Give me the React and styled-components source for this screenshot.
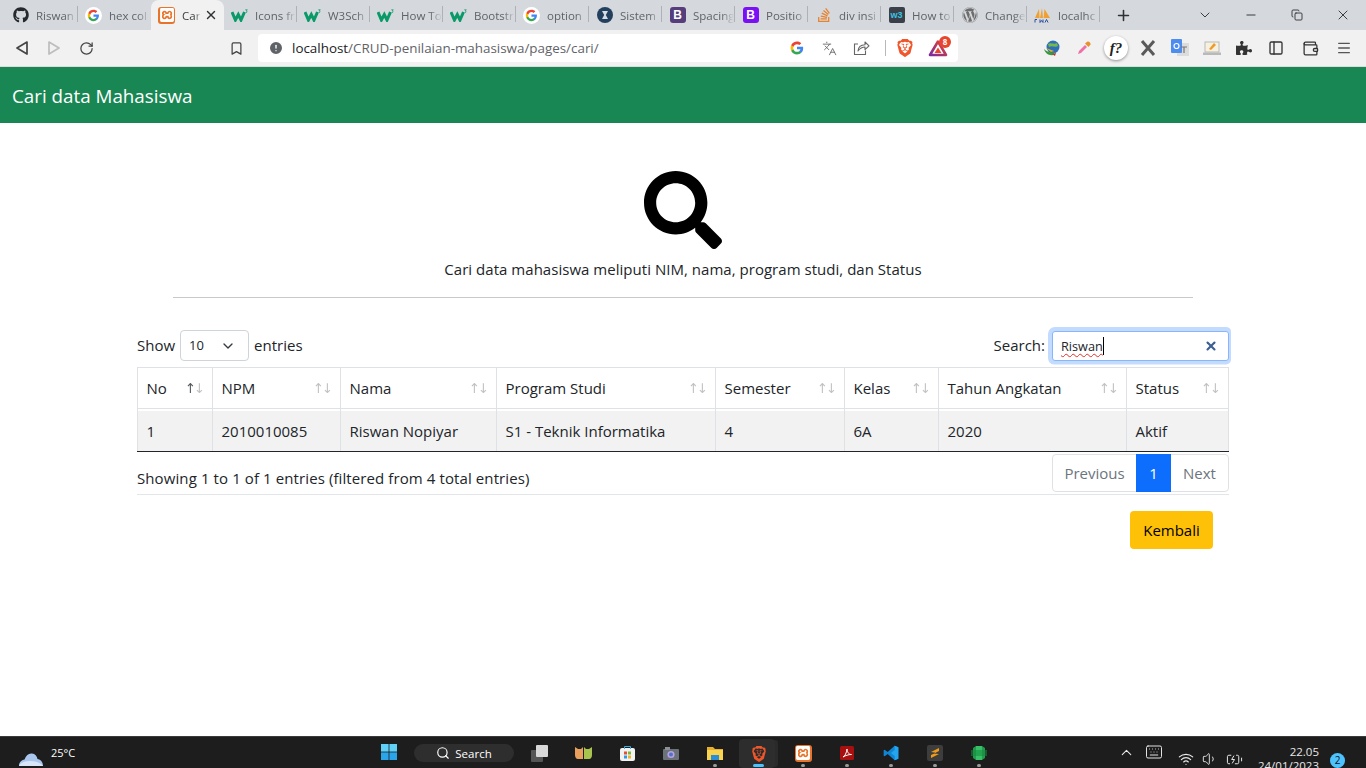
import React from 'react';
import styled, { createGlobalStyle } from 'styled-components';
import { FaGithub, FaStackOverflow, FaWordpress, FaPuzzlePiece, FaSearch } from 'react-icons/fa';
import { SiBrave, SiXampp } from 'react-icons/si';
import { X, Plus, ChevronDown, Minus, RotateCw, Bookmark, Languages, AlertCircle, Menu, Wifi, Volume1, Search as SearchGlyph, ChevronUp, Keyboard, BatteryCharging, Copy, PanelLeft, Wallet } from 'lucide-react';

const SANS = '"Open Sans", "Noto Sans", sans-serif';

const Global = createGlobalStyle`
  html, body { margin: 0; padding: 0; height: 100%; overflow: hidden; background: #fff; }
  #root { height: 100%; }
  * { box-sizing: border-box; }
  body { font-family: ${SANS}; color: #212529; font-size: 15px; }
`;

const Page = styled.div`height: 768px; display: flex; flex-direction: column; overflow: hidden;`;

/* Browser chrome */
const TabStrip = styled.div`height: 30px; flex: none; background: #d5d8dc; display: flex; padding-left: 5px; align-items: stretch;`;
const Tab = styled.div`
  width: 73px; flex: none; position: relative; display: flex; align-items: center; padding-left: 7px;
  background: ${p => p.$active ? '#f1f1f1' : 'transparent'};
  border-radius: 8px 8px 0 0;
  border-right: ${p => p.$noSep ? '1px solid transparent' : '1px solid #aeb1b5'};
  border-image: ${p => p.$noSep ? 'none' : 'linear-gradient(to bottom, transparent 7px, #aeb1b5 7px, #aeb1b5 22px, transparent 22px) 1'};
`;
const FavSlot = styled.span`width: 17px; height: 17px; flex: none; display: flex; align-items: center; justify-content: center; margin-right: 7px;`;
const TabTitle = styled.span`
  flex: 1; min-width: 0; overflow: hidden; white-space: nowrap; font-size: 11.5px; color: ${p => p.$active ? '#3c4043' : '#5f6368'};
  -webkit-mask-image: linear-gradient(to right, #000 70%, transparent 100%);
  mask-image: linear-gradient(to right, #000 70%, transparent 100%);
`;
const TabClose = styled.span`width: 20px; flex: none; display: flex; align-items: center; justify-content: center; margin-right: 2px; color: #2f3134;`;
const NewTab = styled.span`width: 46px; margin-left: 0; display: flex; align-items: center; justify-content: center; color: #2f3134;`;
const WindowControls = styled.div`margin-left: auto; display: flex; align-items: center; color: #2f3134;`;
const WinBtn = styled.span`width: 46px; height: 30px; display: flex; align-items: center; justify-content: center;`;

const Toolbar = styled.div`height: 37px; flex: none; background: #f1f1f1; border-bottom: 1px solid #dcdcdc; display: flex; align-items: flex-start; padding: 4px 6px 0 6px;`;
const ToolBtn = styled.span`
  width: ${p => p.$w || 32}px; height: 28px; flex: none; display: flex; align-items: center; justify-content: center;
  margin-left: ${p => p.$ml || 0}px; color: ${p => p.$color || '#444'};
`;
const Omnibox = styled.div`width: 700px; height: 28px; margin-left: 6px; flex: none; background: #fff; border-radius: 4px; display: flex; align-items: center; padding-left: 10px;`;
const Url = styled.span`flex: 1; margin-left: 8px; font-size: 13.4px; color: #5f6368; white-space: nowrap;`;
const UrlHost = styled.span`color: #202124;`;
const OmniDivider = styled.span`width: 1px; height: 16px; background: #b8b8b8; margin: 0 6px 0 8px;`;
const BatBadge = styled.span`
  position: absolute; top: -2px; right: -3px; width: 12px; height: 12px; border-radius: 50%; background: #e8452c; color: #fff;
  font-size: 8px; font-weight: 700; line-height: 12px; text-align: center;
`;
const BatWrap = styled.span`position: relative; display: flex; width: 20px; height: 20px; align-items: center; justify-content: center;`;
const FontExt = styled.span`
  width: 24px; height: 24px; border-radius: 50%; background: #fff; box-shadow: 0 1px 3px rgba(0,0,0,.4);
  font-family: "Liberation Serif", serif; font-style: italic; font-weight: 700; font-size: 15px; color: #222; display: flex; align-items: center; justify-content: center;
`;

/* Favicons */
const BadgeIcon = styled.span`
  width: 16px; height: 16px; border-radius: 3px; background: ${p => p.$bg}; color: #fff; font-size: 12px; font-weight: 700;
  font-family: "Liberation Sans", sans-serif; display: flex; align-items: center; justify-content: center;
`;
const W3Mark = styled.span`
  width: 16px; height: 16px; border-radius: 2px; background: #3a3f4a; color: #38c4e0; font-size: 9px; font-weight: 700;
  font-family: "Liberation Sans", sans-serif; display: flex; align-items: center; justify-content: center;
`;
const XamppBox = styled.span`width: 17px; height: 17px; background: #e8742b; border-radius: 3px; display: flex; align-items: center; justify-content: center;`;
const SublimeBox = styled.span`width: 16px; height: 16px; background: #3d3d3d; border-radius: 2px; display: flex; align-items: center; justify-content: center;`;
const GPaths = () => (
  <>
    <path fill="#4285F4" d="M22.56 12.25c0-.78-.07-1.53-.2-2.25H12v4.26h5.92c-.26 1.37-1.04 2.53-2.21 3.31v2.77h3.57c2.08-1.92 3.28-4.74 3.28-8.09z" />
    <path fill="#34A853" d="M12 23c2.97 0 5.46-.98 7.28-2.66l-3.57-2.77c-.98.66-2.23 1.06-3.71 1.06-2.86 0-5.29-1.93-6.16-4.53H2.18v2.84C3.99 20.53 7.7 23 12 23z" />
    <path fill="#FBBC05" d="M5.84 14.09c-.22-.66-.35-1.36-.35-2.09s.13-1.43.35-2.09V7.07H2.18C1.43 8.55 1 10.22 1 12s.43 3.45 1.18 4.93l2.85-2.22.81-.62z" />
    <path fill="#EA4335" d="M12 5.38c1.62 0 3.06.56 4.21 1.64l3.15-3.15C17.45 2.09 14.97 1 12 1 7.7 1 3.99 3.47 2.18 7.07l3.66 2.84c.87-2.6 3.3-4.53 6.16-4.53z" />
  </>
);
const GoogleG = ({ size = 16 }) => <svg width={size} height={size} viewBox="0 0 24 24"><GPaths /></svg>;
const GoogleCircle = () => (
  <svg width="17" height="17" viewBox="0 0 24 24">
    <circle cx="12" cy="12" r="12" fill="#fff" />
    <g transform="translate(3.2 3.2) scale(.73)"><GPaths /></g>
  </svg>
);
const W3Logo = () => (
  <svg width="17" height="13" viewBox="0 0 17 13">
    <path d="M1 3 L4.400 11 L7.300 5.500 L10 11 L13.500 3" fill="none" stroke="#0a9a68" strokeWidth="3" strokeLinejoin="miter" />
    <path d="M14.300 .8h2l-1 1.100c.9.200 1 1.700-.3 1.700" fill="none" stroke="#0a9a68" strokeWidth=".8" />
  </svg>
);
const XamppLogo = () => <XamppBox><SiXampp size={14} color="#fff" /></XamppBox>;
const SistemLogo = () => (
  <svg width="16" height="16" viewBox="0 0 16 16">
    <circle cx="8" cy="8" r="8" fill="#24405f" />
    <path d="M5 4h6L8.800 8 11 12H5l2.200-4z" fill="#d7dde4" />
  </svg>
);
const PmaLogo = () => (
  <svg width="17" height="16" viewBox="0 0 17 16">
    <path d="M1 11 L5 2 L5.600 11zM6 11 L8 1 L9 11zM9.600 11 L10.500 2 L16 11z" fill="#f0a030" />
    <path d="M1 12.500h2M1 12.500v3M6 12.500v3l1.500-2 1.500 2v-3M11 15.500l1.500-3 1.500 3" fill="none" stroke="#2a4f9e" strokeWidth="1" />
  </svg>
);
const BatTriangle = () => (
  <svg width="20" height="18" viewBox="0 0 20 18">
    <defs>
      <linearGradient id="batEdge" x1="0" y1="1" x2="1" y2="0">
        <stop offset="0" stopColor="#7a2aa0" /><stop offset="1" stopColor="#e8452c" />
      </linearGradient>
    </defs>
    <path d="M10 2.500 L18 16 H2 Z" fill="none" stroke="url(#batEdge)" strokeWidth="2.600" strokeLinejoin="round" />
    <path d="M10 8.500 L13.500 14 H6.500 Z" fill="#e8452c" />
  </svg>
);
const ShareBox = () => (
  <svg width="17" height="16" viewBox="0 0 17 16">
    <path d="M5 4H1.500v10.500h11V10.500" fill="none" stroke="#666" strokeWidth="1.100" />
    <path d="M5 11c.3-4 3-6 7-6.200V2l4 3.800-4 3.800V7c-3 0-5 1.300-7 4z" fill="none" stroke="#666" strokeWidth="1.100" strokeLinejoin="round" />
  </svg>
);
const IdmIcon = () => (
  <svg width="18" height="18" viewBox="0 0 18 18">
    <circle cx="10" cy="8" r="6.500" fill="#2f6fb8" />
    <path d="M5 5c3-2 6 1 9-1l1 3c-3 2-6-1-9 1z" fill="#76b84a" />
    <path d="M1 10c3 3 7 4 11 3l-2 3c-4 1-8-2-9-6z" fill="#3a9a3a" />
    <path d="M3 9l8 3-3 1z" fill="#e2b21f" />
    <path d="M9 15l4-1-1 3z" fill="#b8352a" />
  </svg>
);
const Dropper = () => (
  <svg width="16" height="16" viewBox="0 0 16 16">
    <path d="M2 14 L3 11 L9 5 L11 7 L5 13 Z" fill="#ef6fa6" />
    <path d="M9 3.500 L12.500 7 L14.500 4.500 C15 3 13 1 11.500 1.500 Z" fill="#e8912c" />
  </svg>
);
const XExt = () => (
  <svg width="18" height="18" viewBox="0 0 18 18">
    <path d="M3 2 L15 16 M15 2 L3 16" stroke="#5a5a5a" strokeWidth="3" fill="none" />
  </svg>
);
const TranslateExt = () => (
  <svg width="18" height="18" viewBox="0 0 18 18">
    <rect x="6" y="4" width="12" height="13" fill="#dcdcdc" />
    <rect x="0" y="0" width="11" height="14" rx="1" fill="#4d8df0" />
    <circle cx="5.500" cy="7" r="2.500" fill="none" stroke="#fff" strokeWidth="1.200" />
    <path d="M10 8h6M13 8v6" stroke="#777" strokeWidth="1.200" />
  </svg>
);
const LaptopExt = () => (
  <svg width="18" height="16" viewBox="0 0 18 16">
    <rect x="2" y="2" width="14" height="10" fill="#f6f1de" stroke="#b9b9b9" />
    <rect x="0" y="12.500" width="18" height="2.500" fill="#b9b9b9" />
    <path d="M6 9 L11 3 L13 5 L8 10 Z" fill="#ef9a2c" />
  </svg>
);
const BraveLogo = ({ size = 18 }) => <SiBrave size={size} color="#f0562a" />;

/* Page */
const Navbar = styled.header`height: 56px; flex: none; background: #198754; display: flex; align-items: center; padding: 1px 0 0 12px; color: #fff; font-size: 18.8px;`;
const Main = styled.main`flex: 1; min-height: 0; display: flex; flex-direction: column; align-items: center; background: #fff;`;
const HeroIcon = styled.div`margin-top: 48px; height: 78px; display: flex; color: #000;`;
const Caption = styled.p`margin: 8px 0 0; height: 24px; line-height: 24px; font-size: 15px; letter-spacing: .03px; color: #212529;`;
const Rule = styled.hr`width: 1020px; margin: 16px 0 0; border: 0; border-top: 1px solid #c9c9c9;`;
const TableArea = styled.div`width: 1092px; margin-top: 32px;`;
const Controls = styled.div`display: flex; justify-content: space-between; align-items: center; height: 31px; margin-bottom: 6px;`;
const ControlGroup = styled.label`display: flex; align-items: center; gap: 5px; font-size: 15px; line-height: 29px;`;
const Select = styled.span`
  width: 69px; height: 31px; border: 1px solid #ced4da; border-radius: 4px; display: flex; align-items: center; justify-content: space-between;
  padding: 0 12px 0 8px; font-size: 13px; background: #fff; line-height: 31px;
`;
const SearchBox = styled.div`
  width: 177px; height: 30px; margin-left: 2px; border: 1px solid #86b7fe; border-radius: 3px; box-shadow: 0 0 0 4px #c2dbfe;
  clip-path: inset(-4px -2px -4px -4px round 5px);
  display: flex; align-items: center; padding: 0 10px 0 8px; font-size: 12.7px; background: #fff; line-height: 18px;
`;
const Spelled = styled.span`text-decoration: underline wavy #e0302a 1px; text-underline-offset: 2px; border-right: 1px solid #000; line-height: 18px;`;
const ClearBtn = styled.span`margin-left: auto; display: flex; color: #3d5f91;`;

const Table = styled.table`width: 1091px; table-layout: fixed; border-collapse: collapse; font-size: 15px;`;
const Col = styled.col`width: ${p => p.$w}px;`;
const Th = styled.th`
  height: 41px; padding: 0 8px 0 8.5px; font-weight: 400; text-align: left; border: 1px solid #dee2e6; border-bottom: 1px solid #dee2e6;
`;
const ThInner = styled.div`display: flex; justify-content: space-between; align-items: center;`;
const SortArrows = styled.span`display: flex; font-size: 13.5px; line-height: 1; padding-top: 1px; font-family: "DejaVu Sans", sans-serif;`;
const Arrow = styled.span`color: #212529; opacity: ${p => p.$on ? 0.75 : 0.28}; width: 9px; display: flex; justify-content: center;`;
const Gap = styled.tr`height: 2px; background: #fff;`;
const GapCell = styled.td`padding: 0; border-left: 1px solid #dee2e6; border-right: 1px solid #dee2e6; height: 2px; line-height: 0; font-size: 0;`;
const Td = styled.td`
  height: 41px; padding: 0 8.5px; background: #f2f2f2; border-left: 1px solid #dee2e6; border-right: 1px solid #dee2e6; border-bottom: 1px solid #212529; font-size: 15px;
`;
const Footer = styled.div`
  display: flex; justify-content: space-between; height: 43px; padding-top: 2px; border-bottom: 1px solid #e3e6e9;
`;
const Info = styled.div`font-size: 15px; letter-spacing: .1px; padding-top: 13px; line-height: 22px;`;
const Pagination = styled.div`display: flex; height: 38px; border: 1px solid #dee2e6; border-radius: 4px; width: 177px;`;
const PageItem = styled.span`
  width: ${p => p.$w}px; margin: ${p => p.$active ? '-1px 0' : '0'}; display: flex; align-items: center; justify-content: center; font-size: 15px;
  color: ${p => p.$active ? '#fff' : '#6c757d'}; background: ${p => p.$active ? '#0d6efd' : 'transparent'};
`;
const ActionRow = styled.div`display: flex; justify-content: flex-end; padding: 16px 16px 0 0;`;
const BackButton = styled.button`
  width: 83px; height: 38px; background: #ffc107; color: #000; border: 0; border-radius: 4px; font-family: ${SANS}; font-size: 15px; padding: 0;
`;

/* Taskbar */
const Taskbar = styled.footer`height: 32px; flex: none; background: #1d1d1d; border-top: 1px solid #3a3a3a; display: flex; align-items: flex-start; overflow: hidden; color: #fff;`;
const Weather = styled.div`width: 378px; flex: none; display: flex; padding: 9px 0 0 18px; font-size: 11px; gap: 7px; line-height: 13px;`;
const CloudClip = styled.span`height: 22px; overflow: visible; display: flex; margin-top: 2px;`;
const StartBtn = styled.span`width: 22px; display: flex; justify-content: center; padding-top: 7px;`;
const SearchPill = styled.span`
  width: 100px; height: 18px; margin: 7px 3px 0 14px; background: #2e2e2e; border-radius: 9px; display: flex; align-items: center; justify-content: center; gap: 5px;
  font-size: 11.5px; font-weight: 500; padding-right: 0;
`;
const TaskIcon = styled.span`
  width: 44px; flex: none; height: 28px; margin-top: 2px; position: relative; display: flex; align-items: center; justify-content: center;
  ${p => p.$active ? 'background:#2d2d2d;border-radius:4px;box-shadow:4px 0 0 -1px #2a2a2a;width:36px;margin-left:2px;margin-right:6px;padding-left:4px;height:29px;' : ''}
`;
const RunDot = styled.span`position: absolute; bottom: 0; left: 50%; margin-left: -2px; width: 4px; height: 3px; border-radius: 2px; background: #9a9a9a;`;
const ActiveBar = styled.span`position: absolute; bottom: 1px; left: 50%; margin-left: -4px; width: 11px; height: 3px; border-radius: 2px; background: #4cc2ff;`;
const Tray = styled.div`margin-left: auto; display: flex; align-items: flex-start; color: #e8e8e8;`;
const TrayIcon = styled.span`width: ${p => p.$w}px; margin-left: ${p => p.$ml || 0}px; display: flex; justify-content: center; padding-top: ${p => p.$top}px;`;
const Clock = styled.div`width: 73px; text-align: right; font-size: 11.5px; line-height: 14px; padding-top: 8px; white-space: nowrap;`;
const ClockDate = styled.div`margin-top: 0px; font-size: 11.5px;`;
const NotifBadge = styled.span`
  width: 15px; height: 15px; margin: 16px 21px 0 11px; border-radius: 50%; background: #4cc2ff; color: #111; font-size: 10px; line-height: 15px; text-align: center;
`;

const W3 = <W3Logo />;
const tabs = [
  { icon: <FaGithub size={16} color="#24292f" />, title: 'Riswan' },
  { icon: <GoogleCircle />, title: 'hex col' },
  { icon: <XamppLogo />, title: 'Cari', active: true },
  { icon: W3, title: 'Icons fr' },
  { icon: W3, title: 'W3Sch' },
  { icon: W3, title: 'How To' },
  { icon: W3, title: 'Bootstr' },
  { icon: <GoogleCircle />, title: 'option' },
  { icon: <SistemLogo />, title: 'Sistem' },
  { icon: <BadgeIcon $bg="#563d7c">B</BadgeIcon>, title: 'Spacing' },
  { icon: <BadgeIcon $bg="#7a11f5">B</BadgeIcon>, title: 'Positio' },
  { icon: <FaStackOverflow size={16} color="#e8822c" />, title: 'div insi' },
  { icon: <W3Mark>w3</W3Mark>, title: 'How to' },
  { icon: <FaWordpress size={16} color="#6d6d6d" />, title: 'Change' },
  { icon: <PmaLogo />, title: 'localhc' },
];

const columns = [
  ['No', 75, true], ['NPM', 128], ['Nama', 156], ['Program Studi', 219], ['Semester', 129], ['Kelas', 94], ['Tahun Angkatan', 188], ['Status', 102],
];
const row = ['1', '2010010085', 'Riswan Nopiyar', 'S1 - Teknik Informatika', '4', '6A', '2020', 'Aktif'];

const Cloud = () => (
  <svg width="26" height="18" viewBox="0 0 26 18">
    <path d="M1 18c0-4 2.500-6 5.500-6.500C8 7 11 5 14 5.500c3 .4 5 2.500 5.500 5.500 3 .3 5.500 3 5.500 7z" fill="#a9c6ec" />
    <path d="M1 18c1-3 5-5 11-5s11 2 13 5z" fill="#d8e6f7" />
  </svg>
);
const WinLogo = () => (
  <svg width="16" height="16" viewBox="0 0 16 16">
    <rect width="7.600" height="7.600" fill="#5fd0f8" /><rect x="8.400" width="7.600" height="7.600" fill="#5fd0f8" />
    <rect y="8.400" width="7.600" height="7.600" fill="#2aa5ea" /><rect x="8.400" y="8.400" width="7.600" height="7.600" fill="#2aa5ea" />
  </svg>
);
const TaskView = () => (
  <svg width="17" height="17" viewBox="0 0 17 17">
    <rect x="0" y="5" width="12" height="12" rx="1" fill="#555" /><rect x="5" y="0" width="12" height="12" rx="1" fill="#d8d8d8" />
  </svg>
);
const Widgets = () => (
  <svg width="17" height="14" viewBox="0 0 17 14">
    <path d="M0 1 L3 3 H6 L8 1 V13 H3 C1 13 0 11 0 9z" fill="#e8a05c" />
    <path d="M17 1 L14 3 H11 L9 1 V13 H14 C16 13 17 11 17 9z" fill="#a9c44e" />
  </svg>
);
const Store = () => (
  <svg width="15" height="16" viewBox="0 0 15 16">
    <rect y="3" width="15" height="13" rx="2" fill="#f2f2f2" />
    <path d="M4.500 4V1.500h6V4" stroke="#39b0e8" fill="none" />
    <rect x="4" y="6.500" width="3" height="3" fill="#e8512c" /><rect x="8" y="6.500" width="3" height="3" fill="#7cb83a" />
    <rect x="4" y="10.500" width="3" height="3" fill="#2e9be8" /><rect x="8" y="10.500" width="3" height="3" fill="#f0b429" />
  </svg>
);
const Camera = () => (
  <svg width="16" height="13" viewBox="0 0 16 13">
    <rect y="2" width="16" height="11" rx="1" fill="#6b7278" /><rect x="2" y="0" width="5" height="3" fill="#8a9096" />
    <circle cx="8" cy="7.500" r="3.600" fill="#b6a2e0" /><circle cx="8" cy="7.500" r="2" fill="#5470c8" />
  </svg>
);
const Folder = () => (
  <svg width="16" height="14" viewBox="0 0 16 14">
    <path d="M0 1h6l2 2h8v11H0z" fill="#e8b02e" /><rect y="4" width="16" height="10" fill="#fbd44e" />
    <rect x="4" y="9" width="8" height="5" fill="#2a8fd8" />
  </svg>
);
const Acrobat = () => (
  <svg width="14" height="14" viewBox="0 0 14 14">
    <rect width="14" height="14" rx="1.500" fill="#a80f0f" />
    <path d="M3 11c2-1 3.500-4 4-8 .5 4 2 5.500 4.500 5.500-3 0-6 1-8.500 2.500z" fill="none" stroke="#fff" strokeWidth="1" />
  </svg>
);
const VSCode = () => (
  <svg width="16" height="16" viewBox="0 0 24 24">
    <path d="M17.500 1 L23 3.500 V20.500 L17.500 23 L7 13.500 L2.500 17 L1 16 V8 L2.500 7 L7 10.500z" fill="#0f86d4" />
    <path d="M17.500 1 L23 3.500 V20.500 L17.500 23 V16.500 L12 12 L17.500 7.500z" fill="#25a5ee" />
  </svg>
);
const Sublime = () => (
  <SublimeBox>
    <svg width="10" height="12" viewBox="0 0 10 12"><path d="M1 5 L9 1 V4 L4 6.500 L9 7 L1 11 V8 L6 5.800z" fill="#f09a1a" /></svg>
  </SublimeBox>
);
const GreenBox = () => (
  <svg width="16" height="16" viewBox="0 0 16 16">
    <path d="M2 3 L5 1 H11 L14 3 V13 L11 15 H5 L2 13z" fill="#1f9d4c" />
    <path d="M5 1 H11 V15 H5z" fill="#37c066" /><path d="M0 5h16v6H0z" fill="#168a3f" opacity=".55" />
  </svg>
);

const taskApps = [
  { icon: <TaskView /> }, { icon: <Widgets /> }, { icon: <Store /> }, { icon: <Camera /> },
  { icon: <Folder />, running: true }, { icon: <BraveLogo size={16} />, active: true }, { icon: <XamppLogo />, running: true },
  { icon: <Acrobat />, running: true }, { icon: <VSCode />, running: true }, { icon: <Sublime />, running: true }, { icon: <GreenBox />, running: true },
];

export default function App() {
  return (
    <Page>
      <Global />
      <TabStrip>
        {tabs.map((t, i) => (
          <Tab key={i} $active={t.active} $noSep={t.active || (tabs[i + 1] && tabs[i + 1].active)}>
            <FavSlot>{t.icon}</FavSlot>
            <TabTitle $active={t.active}>{t.title}</TabTitle>
            {t.active && <TabClose><X size={14} strokeWidth={2.4} /></TabClose>}
          </Tab>
        ))}
        <NewTab><Plus size={17} strokeWidth={2.2} /></NewTab>
        <WindowControls>
          <WinBtn><ChevronDown size={16} strokeWidth={1.4} /></WinBtn>
          <WinBtn><Minus size={14} strokeWidth={1.6} /></WinBtn>
          <WinBtn><Copy size={12} strokeWidth={1.8} /></WinBtn>
          <WinBtn><X size={16} strokeWidth={1.4} /></WinBtn>
        </WindowControls>
      </TabStrip>
      <Toolbar>
        <ToolBtn>
          <svg width="14" height="16" viewBox="0 0 14 16"><path d="M12 2 L2 8 L12 14 Z" fill="none" stroke="#444" strokeWidth="1.700" strokeLinejoin="round" /></svg>
        </ToolBtn>
        <ToolBtn>
          <svg width="14" height="16" viewBox="0 0 14 16"><path d="M2 2 L12 8 L2 14 Z" fill="none" stroke="#bdbdbd" strokeWidth="1.700" strokeLinejoin="round" /></svg>
        </ToolBtn>
        <ToolBtn><RotateCw size={15} strokeWidth={2} /></ToolBtn>
        <ToolBtn $ml={118}><Bookmark size={15} strokeWidth={2} /></ToolBtn>
        <Omnibox>
          <AlertCircle size={16} fill="#5f6368" color="#fff" strokeWidth={2} />
          <Url><UrlHost>localhost</UrlHost>/CRUD-penilaian-mahasiswa/pages/cari/</Url>
          <ToolBtn><GoogleG size={14} /></ToolBtn>
          <ToolBtn><Languages size={15} strokeWidth={1.4} color="#666" /></ToolBtn>
          <ToolBtn><ShareBox /></ToolBtn>
          <OmniDivider />
          <ToolBtn $w={26}><BraveLogo /></ToolBtn>
          <ToolBtn $w={40}>
            <BatWrap><BatTriangle /><BatBadge>8</BatBadge></BatWrap>
          </ToolBtn>
        </Omnibox>
        <ToolBtn $ml={78}><IdmIcon /></ToolBtn>
        <ToolBtn><Dropper /></ToolBtn>
        <ToolBtn><FontExt>f?</FontExt></ToolBtn>
        <ToolBtn><XExt /></ToolBtn>
        <ToolBtn><TranslateExt /></ToolBtn>
        <ToolBtn><LaptopExt /></ToolBtn>
        <ToolBtn><FaPuzzlePiece size={16} color="#333" /></ToolBtn>
        <ToolBtn><PanelLeft size={16} strokeWidth={2} color="#333" /></ToolBtn>
        <ToolBtn $w={36}><Wallet size={17} strokeWidth={1.8} color="#333" /></ToolBtn>
        <ToolBtn><Menu size={16} strokeWidth={2} color="#555" /></ToolBtn>
      </Toolbar>

      <Navbar>Cari data Mahasiswa</Navbar>
      <Main>
        <HeroIcon><FaSearch size={78} /></HeroIcon>
        <Caption>Cari data mahasiswa meliputi NIM, nama, program studi, dan Status</Caption>
        <Rule />
        <TableArea>
          <Controls>
            <ControlGroup>
              Show
              <Select>10 <ChevronDown size={16} strokeWidth={2} color="#343a40" /></Select>
              entries
            </ControlGroup>
            <ControlGroup>
              Search:
              <SearchBox>
                <Spelled>Riswan</Spelled>
                <ClearBtn><X size={14} strokeWidth={3.6} /></ClearBtn>
              </SearchBox>
            </ControlGroup>
          </Controls>
          <Table>
            <colgroup>{columns.map(([n, w]) => <Col key={n} $w={w} />)}</colgroup>
            <thead>
              <tr>
                {columns.map(([n, , on]) => (
                  <Th key={n}>
                    <ThInner>
                      {n}
                      <SortArrows><Arrow $on={on}>↑</Arrow><Arrow>↓</Arrow></SortArrows>
                    </ThInner>
                  </Th>
                ))}
              </tr>
            </thead>
            <tbody>
              <Gap>{columns.map(([n]) => <GapCell key={n} />)}</Gap>
              <tr>{row.map((v, i) => <Td key={i}>{v}</Td>)}</tr>
            </tbody>
          </Table>
          <Footer>
            <Info>Showing 1 to 1 of 1 entries (filtered from 4 total entries)</Info>
            <Pagination>
              <PageItem $w={83}>Previous</PageItem>
              <PageItem $w={35} $active>1</PageItem>
              <PageItem $w={57}>Next</PageItem>
            </Pagination>
          </Footer>
          <ActionRow><BackButton>Kembali</BackButton></ActionRow>
        </TableArea>
      </Main>
      <Taskbar>
        <Weather><CloudClip><Cloud /></CloudClip>25°C</Weather>
        <StartBtn><WinLogo /></StartBtn>
        <SearchPill><SearchGlyph size={14} strokeWidth={2} /> Search</SearchPill>
        {taskApps.map((a, i) => (
          <TaskIcon key={i} $active={a.active}>
            {a.icon}
            {a.running && <RunDot />}
            {a.active && <ActiveBar />}
          </TaskIcon>
        ))}
        <Tray>
          <TrayIcon $w={28} $top={7}><ChevronUp size={17} strokeWidth={1.5} /></TrayIcon>
          <TrayIcon $w={28} $top={6}><Keyboard size={18} strokeWidth={1.3} /></TrayIcon>
          <TrayIcon $w={24} $ml={6} $top={14}><Wifi size={16} strokeWidth={1.8} /></TrayIcon>
          <TrayIcon $w={24} $top={14}><Volume1 size={16} strokeWidth={1.4} /></TrayIcon>
          <TrayIcon $w={24} $top={14}><BatteryCharging size={17} strokeWidth={1.4} /></TrayIcon>
          <Clock>22.05<ClockDate>24/01/2023</ClockDate></Clock>
          <NotifBadge>2</NotifBadge>
        </Tray>
      </Taskbar>
    </Page>
  );
}
